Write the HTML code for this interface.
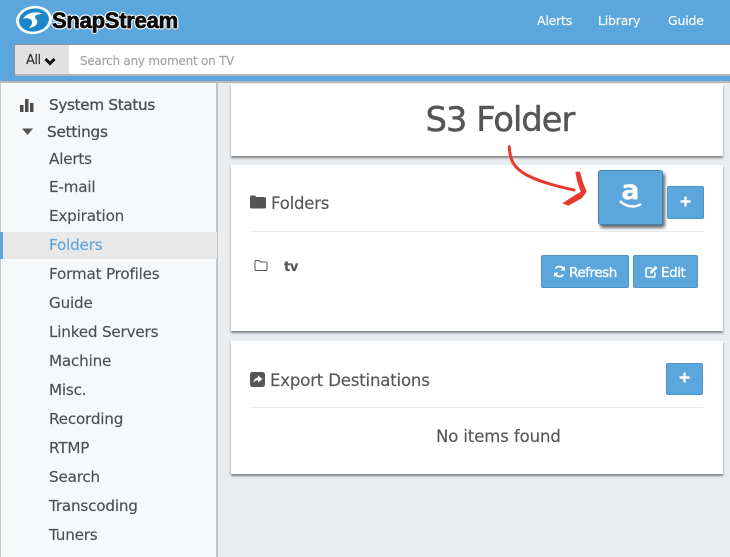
<!DOCTYPE html>
<html><head><meta charset="utf-8">
<style>
*{box-sizing:border-box}
html,body{margin:0;padding:0;width:730px;height:557px;overflow:hidden;background:#e9edf0}
#wrap{position:relative;width:730px;height:557px;overflow:hidden;background:#e9edf0;font-family:"DejaVu Sans","Liberation Sans",sans-serif;color:#555;-webkit-text-stroke:.15px currentColor}
.a{position:absolute;white-space:nowrap}
#hdr{left:0;top:0;width:730px;height:83px;background:#5ba7dd;border-bottom:2px solid #b9b9b9}
#side{left:0;top:83px;width:218px;height:474px;background:#f7f8fa;border-right:2px solid #c4c6c8;border-left:1px solid #c8c8c8}
.n{left:49px;font-size:15.2px;line-height:20px;color:#4a4f55;letter-spacing:-.2px}
.card{background:#fff;left:231px;width:492px;box-shadow:0 2px 2px rgba(0,0,0,.45)}
.btn{background:#5ba7dd;border:1px solid #4f94c7;border-radius:2px;color:#fff}
.hr{height:1px;background:#eaeaea}
.w{color:#fff;font-size:12.5px;line-height:16px;letter-spacing:-.2px}
</style></head><body><div id="wrap">
<div class="a" id="hdr"></div>
<svg class="a" style="left:14px;top:4px" width="40" height="32" viewBox="0 0 40 32">
<ellipse cx="20" cy="16" rx="18" ry="14" fill="#fff" transform="rotate(-8 20 16)"/>
<ellipse cx="20" cy="16" rx="15" ry="11.500" fill="#1c86cb" transform="rotate(-8 20 16)"/>
<path d="M9 15C13 8 23 7 29 10C24 10 19 11 22 15C25 18 23 23 15 24C19 20 19 17 16 15C14 14 11 14 9 15Z" fill="#fff"/>
</svg>
<div class="a" style="left:52px;top:7px;font:bold 22px/28px 'Liberation Sans',sans-serif;color:#0a0a0a;letter-spacing:-.25px;text-shadow:1.500px 0 0 #fff,-1.500px 0 0 #fff,0 1.500px 0 #fff,0 -1.500px 0 #fff,1px 1px 0 #fff,-1px -1px 0 #fff,1px -1px 0 #fff,-1px 1px 0 #fff;-webkit-text-stroke:.7px #0a0a0a">SnapStream</div>
<div class="a w" style="left:537px;top:13px">Alerts</div>
<div class="a w" style="left:598px;top:13px">Library</div>
<div class="a w" style="left:668px;top:13px">Guide</div>
<div class="a" style="left:14px;top:44px;width:716px;height:32px;background:#fff;border:1px solid #8f8f8f;border-right:0;border-bottom:2px solid #b5b5b5;border-radius:2px 0 0 2px"></div>
<div class="a" style="left:15px;top:45px;width:54px;height:29px;background:#e2e2e2"></div>
<div class="a" style="left:26px;top:53px;font-size:13px;line-height:16px;color:#333;letter-spacing:-.5px">All</div>
<svg class="a" style="left:44px;top:57px" width="12" height="9" viewBox="0 0 12 9"><path d="M1.500 2L6 6.500L10.500 2" fill="none" stroke="#111" stroke-width="3"/></svg>
<div class="a" style="left:80px;top:53px;font-size:12px;line-height:16px;color:#a3a3a3;letter-spacing:-.23px">Search any moment on TV</div>

<div class="a" id="side"></div>
<svg class="a" style="left:19px;top:98px" width="16" height="14" viewBox="0 0 16 14"><path d="M1 7h3.500v7H1zM6 1h3.500v13H6zM11 5h3.500v9H11z" fill="#4c4c4c"/></svg>
<div class="a n" style="top:95px;letter-spacing:-.3px;-webkit-text-stroke:.3px #4a4f55">System Status</div>
<svg class="a" style="left:21px;top:128px" width="13" height="8" viewBox="0 0 13 8"><path d="M1 .5h11L6.500 7z" fill="#555"/></svg>
<div class="a n" style="left:47px;top:122px;-webkit-text-stroke:.3px #4a4f55">Settings</div>
<div class="a n" style="top:149px">Alerts</div>
<div class="a n" style="top:177px">E-mail</div>
<div class="a n" style="top:206px">Expiration</div>
<div class="a" style="left:1px;top:232px;width:216px;height:27px;background:#e8e8e8"></div>
<div class="a" style="left:0;top:232px;width:3px;height:27px;background:#5ba7dd"></div>
<div class="a n" style="top:235px;color:#5ba7dd">Folders</div>
<div class="a n" style="top:264px">Format Profiles</div>
<div class="a n" style="top:293px">Guide</div>
<div class="a n" style="top:322px">Linked Servers</div>
<div class="a n" style="top:351px">Machine</div>
<div class="a n" style="top:380px">Misc.</div>
<div class="a n" style="top:409px">Recording</div>
<div class="a n" style="top:438px">RTMP</div>
<div class="a n" style="top:467px">Search</div>
<div class="a n" style="top:496px">Transcoding</div>
<div class="a n" style="top:525px">Tuners</div>
<div class="a n" style="top:554px;color:#b5b8bb">Watch</div>

<div class="a card" style="top:84px;height:72px"></div>
<div class="a" style="left:231px;top:99px;width:538px;text-align:center;font-size:33.500px;line-height:42px;color:#555;letter-spacing:-.9px;-webkit-text-stroke:.5px #555">S3 Folder</div>

<div class="a card" style="top:165px;height:166px"></div>
<svg class="a" style="left:250px;top:195px" width="16" height="14" viewBox="0 0 16 14"><path d="M0 2Q0 .5 1.500 .5H5L6.500 2H14Q16 2 16 4V12Q16 13.500 14.500 13.500H1.500Q0 13.500 0 12Z" fill="#555"/></svg>
<div class="a" style="left:271px;top:194px;font-size:16.500px;line-height:20px;color:#555;letter-spacing:-.2px">Folders</div>
<div class="a hr" style="left:250px;top:231px;width:454px"></div>
<svg class="a" style="left:254px;top:259px" width="14" height="13" viewBox="0 0 14 13"><path d="M1 2.500Q1 1.500 2 1.500H5L6.500 3H12Q13 3 13 4V10.500Q13 11.500 12 11.500H2Q1 11.500 1 10.500Z" fill="none" stroke="#555" stroke-width="1"/></svg>
<div class="a" style="left:284px;top:259px;font-size:13px;font-weight:bold;line-height:18px;color:#555;letter-spacing:-.4px">tv</div>

<svg class="a" style="left:500px;top:140px" width="100" height="75" viewBox="0 0 100 75"><path d="M9.300 6.700C9.500 14 11 19 13.300 23.300C17 29 21 32 26.700 35C40 42 56 46 74 50" fill="none" stroke="#e8392e" stroke-width="3" stroke-linecap="round"/><path d="M75.300 31.700L80 31.700L82.700 41.700L86.700 51.700L81.700 58.300L68.300 65.700L62.300 63.300L71.700 57.300L80.700 51.700L77.300 41.700Z" fill="#e8392e"/></svg>

<div class="a btn" style="left:598px;top:170px;width:65px;height:55px;border-radius:3px;box-shadow:2px 3px 3px rgba(0,0,0,.6);border-color:#3f84b8"></div>
<div class="a" style="left:598px;top:178px;width:65px;text-align:center;font:bold 27px/26px 'DejaVu Sans',sans-serif;color:#fff">a</div>
<svg class="a" style="left:618px;top:200px" width="26" height="10" viewBox="0 0 26 10"><path d="M2 1C8 7 17 8 23 4" fill="none" stroke="#fff" stroke-width="2.500"/></svg>
<div class="a btn" style="left:667px;top:186px;width:37px;height:33px"></div>
<svg class="a" style="left:680px;top:196px" width="11" height="11" viewBox="0 0 11 11"><path d="M5.500 .5v10M.5 5.500h10" stroke="#fff" stroke-width="2.400"/></svg>

<div class="a btn" style="left:541px;top:255px;width:88px;height:33px"></div>
<svg class="a" style="left:553px;top:265px" width="13" height="13" viewBox="0 0 13 13"><path d="M11 5A4.800 4.800 0 0 0 2.500 3.500M2 8A4.800 4.800 0 0 0 10.500 9.500" fill="none" stroke="#fff" stroke-width="1.800"/><path d="M12 1V5.500H7.500ZM1 12V7.500H5.500Z" fill="#fff"/></svg>
<div class="a w" style="left:569px;top:265px;font-size:13.500px;letter-spacing:-.45px;-webkit-text-stroke:.3px #fff">Refresh</div>
<div class="a btn" style="left:633px;top:255px;width:65px;height:33px"></div>
<svg class="a" style="left:645px;top:265px" width="14" height="13" viewBox="0 0 14 13"><path d="M10 7.500V10.500Q10 12 8.500 12H2.500Q1 12 1 10.500V4.500Q1 3 2.500 3H7" fill="none" stroke="#fff" stroke-width="1.600"/><path d="M5 6.500L10.500 1L12.500 3L7 8.500H5Z" fill="#fff"/></svg>
<div class="a w" style="left:661px;top:265px;font-size:13.500px;letter-spacing:-.45px;-webkit-text-stroke:.3px #fff">Edit</div>

<div class="a card" style="top:341px;height:133px"></div>
<svg class="a" style="left:250px;top:372px" width="15" height="15" viewBox="0 0 15 15"><rect x="0" y="0" width="15" height="15" rx="2.500" fill="#555"/><path d="M8 3.500L12.500 7L8 10.500V8.300C6 8.300 4.500 9 3.500 11C3.500 7.500 5.500 5.800 8 5.600Z" fill="#fff"/></svg>
<div class="a" style="left:270px;top:370px;font-size:16.600px;line-height:22px;color:#555;letter-spacing:-.2px">Export Destinations</div>
<div class="a btn" style="left:666px;top:363px;width:37px;height:32px"></div>
<svg class="a" style="left:679px;top:372px" width="11" height="11" viewBox="0 0 11 11"><path d="M5.500 .5v10M.5 5.500h10" stroke="#fff" stroke-width="2.400"/></svg>
<div class="a hr" style="left:250px;top:407px;width:453px"></div>
<div class="a" style="left:436px;top:427px;font-size:16.500px;line-height:20px;color:#555;letter-spacing:-.1px">No items found</div>
</div></body></html>
